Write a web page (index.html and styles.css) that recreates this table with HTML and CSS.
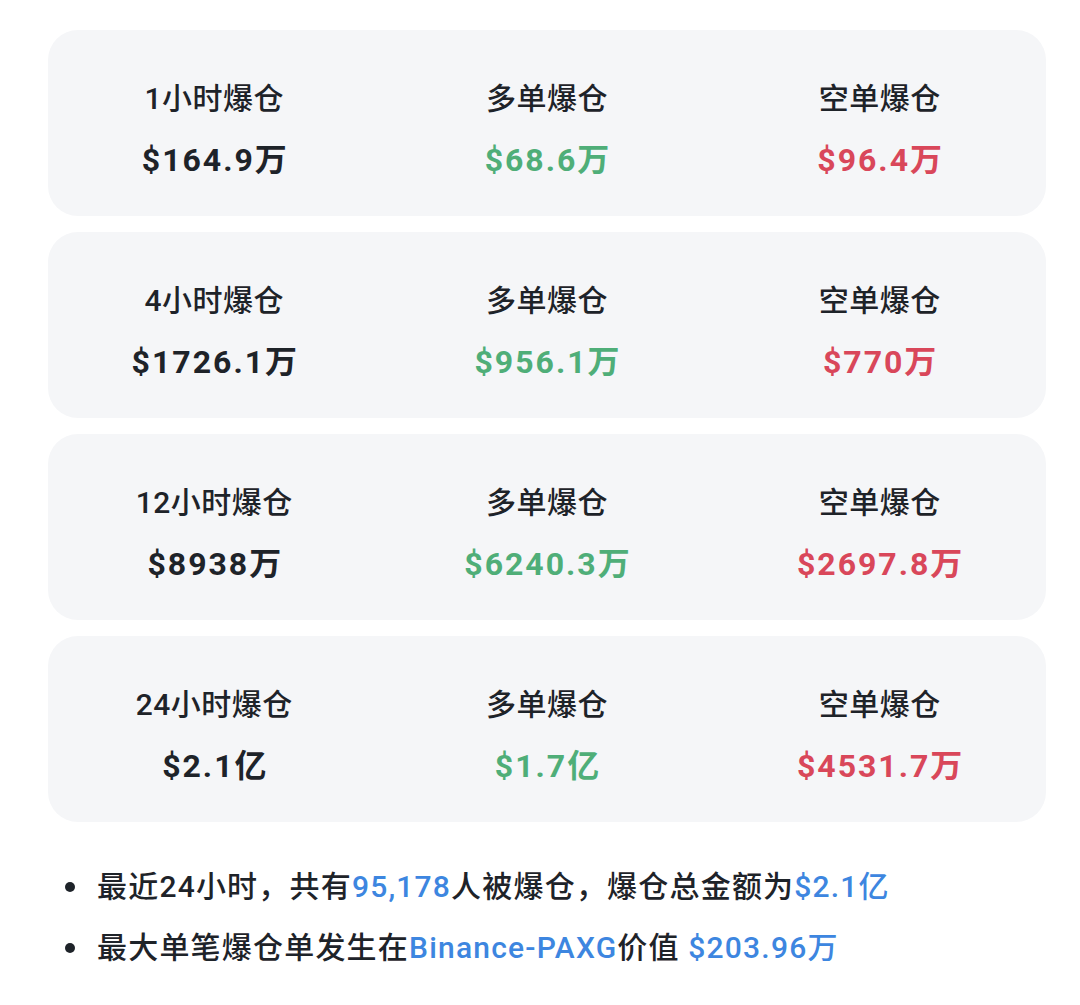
FILE: index.html
```html
<!DOCTYPE html>
<html lang="zh-CN">
<head>
<meta charset="utf-8">
<link rel="stylesheet" href="styles.css">
</head>
<body>
<main class="page">
  <section class="card">
    <div class="cell"><div class="label">1小时爆仓</div><div class="value">$164.9万</div></div>
    <div class="cell"><div class="label">多单爆仓</div><div class="value up">$68.6万</div></div>
    <div class="cell"><div class="label">空单爆仓</div><div class="value down">$96.4万</div></div>
  </section>
  <section class="card">
    <div class="cell"><div class="label">4小时爆仓</div><div class="value">$1726.1万</div></div>
    <div class="cell"><div class="label">多单爆仓</div><div class="value up">$956.1万</div></div>
    <div class="cell"><div class="label">空单爆仓</div><div class="value down">$770万</div></div>
  </section>
  <section class="card">
    <div class="cell"><div class="label">12小时爆仓</div><div class="value">$8938万</div></div>
    <div class="cell"><div class="label">多单爆仓</div><div class="value up">$6240.3万</div></div>
    <div class="cell"><div class="label">空单爆仓</div><div class="value down">$2697.8万</div></div>
  </section>
  <section class="card">
    <div class="cell"><div class="label">24小时爆仓</div><div class="value">$2.1亿</div></div>
    <div class="cell"><div class="label">多单爆仓</div><div class="value up">$1.7亿</div></div>
    <div class="cell"><div class="label">空单爆仓</div><div class="value down">$4531.7万</div></div>
  </section>
  <ul class="notes">
    <li>最近24小时，共有<span class="hl">95,178</span>人被爆仓，爆仓总金额为<span class="hl">$2.1亿</span></li>
    <li>最大单笔爆仓单发生在<span class="hl">Binance-PAXG</span>价值 <span class="hl">$203.96万</span></li>
  </ul>
</main>
</body>
</html>
```
FILE: styles.css
```css
* { box-sizing: border-box; }
html, body { margin: 0; padding: 0; background: #ffffff; }
body {
  font-family: "Roboto", "Noto Sans CJK SC", sans-serif;
  color: #1e2329;
}
.page {
  width: 998px;
  margin-left: 48px;
  padding-top: 30px;
  display: flex;
  flex-direction: column;
  gap: 16px;
}
.card {
  height: 186px;
  background: #f5f6f8;
  border-radius: 30px;
  display: grid;
  grid-template-columns: 1fr 1fr 1fr;
  padding-top: 49px;
}
.cell {
  display: flex;
  flex-direction: column;
  align-items: center;
  gap: 19px;
}
.label {
  font-size: 30px;
  line-height: 40px;
  font-weight: 500;
  letter-spacing: 0.5px;
  color: #1e2329;
}
.value {
  font-size: 32px;
  line-height: 44px;
  font-weight: 700;
  letter-spacing: 2px;
  margin-left: 2px;
  color: #1e2329;
}
.value.up { color: #4fae78; }
.value.down { color: #d9475a; }
.notes {
  list-style: none;
  margin: 18px 0 0 0;
  padding: 0 0 0 17px;
}
.notes li {
  position: relative;
  font-size: 30px;
  line-height: 61px;
  font-weight: 500;
  letter-spacing: 1.2px;
  padding-left: 32px;
}
.notes li::before {
  content: "";
  position: absolute;
  left: 0;
  top: 26px;
  width: 10px;
  height: 10px;
  border-radius: 50%;
  background: #1e2329;
}
.hl { color: #3d86e0; }
```
